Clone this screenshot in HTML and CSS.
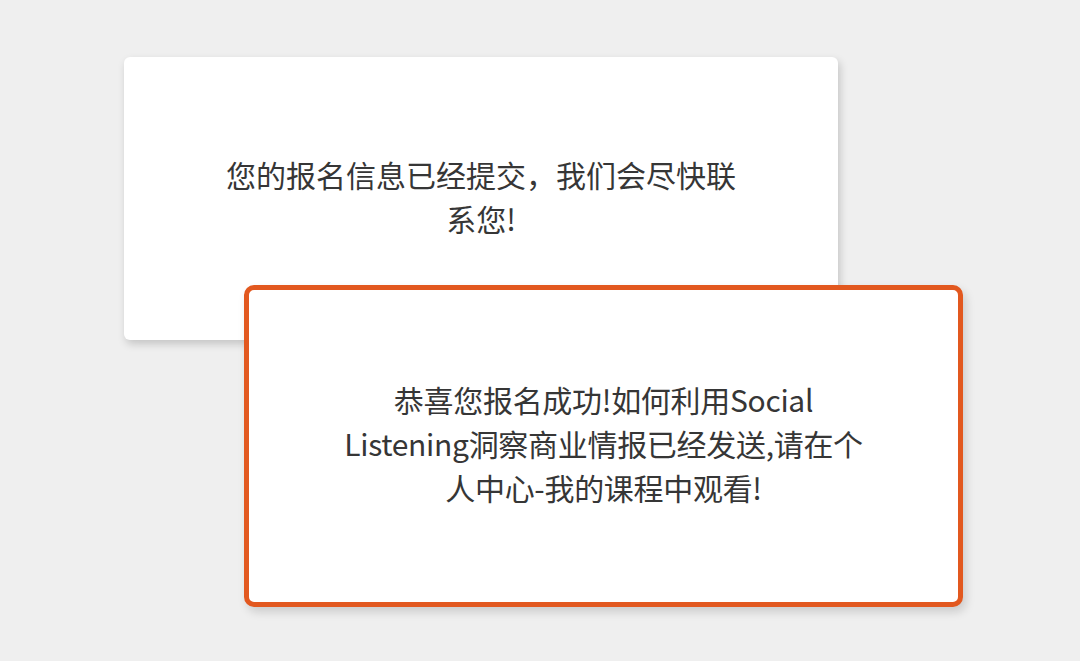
FILE: index.html
```html
<!DOCTYPE html>
<html lang="zh-CN">
<head>
  <meta charset="UTF-8" />
  <meta name="viewport" content="width=device-width, initial-scale=1.0" />
  <title>报名成功</title>
  <link rel="stylesheet" href="styles.css">
</head>
<body>
  <div class="stage">
    <!-- first notice -->
    <div class="card card-plain">
      <p class="msg">您的报名信息已经提交，我们会尽快联系您!</p>
    </div>

    <!-- highlighted notice, overlaps the first one -->
    <div class="card card-active">
      <p class="msg">恭喜您报名成功!如何利用Social Listening洞察商业情报已经发送,请在个人中心-我的课程中观看!</p>
    </div>
  </div>
</body>
</html>
```

FILE: styles.css
```css
body {
  margin: 0;
  background: #efefef;
  font-family: "Noto Sans CJK SC", "Noto Sans", sans-serif;
  color: #363636;
}

.stage {
  width: 1080px;
  height: 661px;
  padding-top: 57px;
  box-sizing: border-box;
  overflow: hidden;
}

.card {
  display: flex;
  justify-content: center;
  align-items: center;
  padding-bottom: 6px;
  background: #fff;
  box-sizing: border-box;
}

.card-plain {
  width: 714px;
  height: 283px;
  margin-left: 124px;
  border-radius: 6px;
  box-shadow: 2px 4px 8px rgba(0,0,0,0.18);
}

.card-active {
  position: relative;
  width: 719px;
  height: 322px;
  margin: -55px 0 0 244px;
  border: 5px solid #e2581f;
  border-radius: 10px;
  box-shadow: 3px 5px 10px rgba(0,0,0,0.15);
}

.msg {
  margin: 0;
  width: 528px;
  font-size: 30px;
  line-height: 44px;
  text-align: center;
}

.card-active .msg {
  letter-spacing: -0.3px;
}
```
